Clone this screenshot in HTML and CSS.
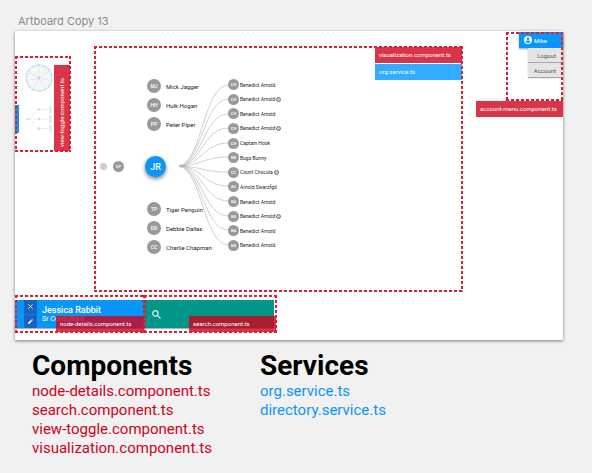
FILE: index.html
```html
<!DOCTYPE html>
<html lang="en">
<head>
<meta charset="utf-8">
<title>Artboard Copy 13</title>
<link rel="stylesheet" href="styles.css">
</head>
<body>
<h1 class="board-name">Artboard Copy 13</h1>
<main class="artboard">
  <div class="workspace">
    <section class="toggle outlined">
      <div class="toggle-options">
        <button class="view" aria-label="Radial view">
          <svg width="28" height="28" viewBox="0 0 28 28" fill="none"><circle cx="14" cy="14" r="11.500" fill="#f6f7f8" stroke="#e3e6e8" stroke-width=".6"/><circle cx="14" cy="14" r="13" stroke="#b5dcf8" stroke-width="1.300" stroke-dasharray="5 .8"/><path d="M14 14 5 8M14 14 14 4M14 14 23 8M14 14 24 16M14 14 19 23M14 14 9 23M14 14 4 16" stroke="#dcdfe2" stroke-width=".7"/><circle cx="14" cy="14" r="6" stroke="#cfe4f3" stroke-width=".8" stroke-dasharray="1 3"/><circle cx="14" cy="14" r="1.500" fill="#b5dcf8"/></svg>
        </button>
        <button class="view current" aria-label="Tree view">
          <svg width="28" height="28" viewBox="0 0 28 28" fill="none"><path d="M3 14H24M3 14C9 14 8 4.500 14 4.500H24M3 14C9 14 8 23.500 14 23.500H24" stroke="#e4e6e8" stroke-width=".7"/><g fill="#b5dcf8"><circle cx="2.500" cy="14" r="1"/><circle cx="14" cy="4.500" r="1.200"/><circle cx="14" cy="14" r="1.200"/><circle cx="14" cy="23.500" r="1.200"/></g><path d="M25.500 1v7M25.500 10.500v7M25.500 20v7" stroke="#d0e8f9" stroke-width="2"/></svg>
        </button>
      </div>
      <span class="tag tag-side">view-toggle.component.ts</span>
    </section>

    <section class="chart outlined">
      <svg class="links" width="50" height="172" viewBox="0 0 50 172" fill="none" stroke="#d0d0d0" stroke-width="1"><path d="M0 87C24 82 24 6 50 6M0 87C24 83 24 20 50 20M0 87C24 84 24 35 50 35M0 87C24 84 24 49 50 49M0 87C24 85 24 64 50 64M0 87C24 86 24 78 50 78M0 87C24 88 24 93 50 93M0 87C24 88 24 107 50 107M0 87C24 89 24 122 50 122M0 87C24 90 24 137 50 137M0 87C24 91 24 151 50 151M0 87C24 92 24 166 50 166"/><path d="M0 87h7" stroke="#999"/></svg>
      <div class="ancestors"><span class="dot"></span><span class="avatar">SP</span></div>
      <div class="peers">
        <ul class="people">
          <li><span class="avatar">MJ</span>Mick Jagger</li>
          <li><span class="avatar">HH</span>Hulk Hogan</li>
          <li><span class="avatar">PP</span>Peter Piper</li>
        </ul>
        <span class="avatar selected">JR</span>
        <ul class="people">
          <li><span class="avatar">TP</span>Tiger Penguin</li>
          <li><span class="avatar">DD</span>Debbie Dallas</li>
          <li><span class="avatar">CC</span>Charlie Chapman</li>
        </ul>
      </div>
      <ul class="reports">
        <li><span class="avatar">CH</span>Benedict Arnold</li>
        <li><span class="avatar">CH</span>Benedict Arnold<i class="more"></i></li>
        <li><span class="avatar">CH</span>Benedict Arnold</li>
        <li><span class="avatar">CH</span>Benedict Arnold<i class="more"></i></li>
        <li><span class="avatar">CH</span>Captain Hook</li>
        <li><span class="avatar">BB</span>Bugs Bunny</li>
        <li><span class="avatar">CC</span>Count Chocula<i class="more"></i></li>
        <li><span class="avatar">AS</span>Arnold Swarzfgd</li>
        <li><span class="avatar">BA</span>Benedict Arnold</li>
        <li><span class="avatar">BA</span>Benedict Arnold<i class="more"></i></li>
        <li><span class="avatar">BA</span>Benedict Arnold</li>
        <li><span class="avatar">BA</span>Benedict Arnold</li>
      </ul>
      <div class="chart-tags">
        <span class="tag">visualization.component.ts</span>
        <span class="tag tag-service">org.service.ts</span>
      </div>
    </section>

    <section class="account">
      <div class="account-area outlined">
        <button class="user"><svg width="8" height="8" viewBox="0 0 24 24" fill="#fff"><path d="M12 0a12 12 0 1 0 0 24 12 12 0 0 0 0-24zm0 4a4 4 0 1 1 0 8 4 4 0 0 1 0-8zm0 17a9 9 0 0 1-7-3.600c0-2.400 4.700-3.600 7-3.600s7 1.200 7 3.600A9 9 0 0 1 12 21z"/></svg>Mike</button>
        <button class="item">Logout</button>
        <button class="item">Account</button>
      </div>
      <span class="tag">account-menu.component.ts</span>
    </section>
  </div>

  <div class="bottom">
    <section class="details outlined">
      <div class="panel">
        <div class="actions">
          <button aria-label="Close"><svg width="5" height="5" viewBox="0 0 6 6" stroke="#fff" stroke-width="1"><path d="M.5.5l5 5M5.500.5l-5 5"/></svg></button>
          <button aria-label="Edit"><svg width="5" height="5" viewBox="0 0 6 6" fill="#fff"><path d="M0 6V4.600L3.500 1.100 4.900 2.500 1.400 6zM4 .7l.7-.7L6 1.300l-.7.7z"/></svg></button>
        </div>
        <div class="person"><h2>Jessica Rabbit</h2><p>Sr Consultant</p></div>
      </div>
      <span class="tag">node-details.component.ts</span>
    </section>
    <section class="search outlined">
      <label class="panel">
        <svg width="9" height="9" viewBox="0 0 9 9" fill="none" stroke="#d9f0ed" stroke-width="1.200"><circle cx="3.400" cy="3.400" r="2.700"/><path d="M5.400 5.400 8.500 8.500"/></svg>
        <input type="search" aria-label="Search">
      </label>
      <span class="tag">search.component.ts</span>
    </section>
  </div>
</main>

<footer class="legend">
  <section>
    <h2>Components</h2>
    <ul>
      <li>node-details.component.ts</li>
      <li>search.component.ts</li>
      <li>view-toggle.component.ts</li>
      <li>visualization.component.ts</li>
    </ul>
  </section>
  <section class="services">
    <h2>Services</h2>
    <ul>
      <li>org.service.ts</li>
      <li>directory.service.ts</li>
    </ul>
  </section>
</footer>
</body>
</html>
```
FILE: styles.css
```css
* { box-sizing: border-box; }
body {
  margin: 0;
  background: #f1f1f1;
  font-family: Roboto, sans-serif;
  color: #222;
}
h1, h2, p, ul { margin: 0; padding: 0; }
ul { list-style: none; }
button {
  border: 0;
  padding: 0;
  font: inherit;
  color: inherit;
  background: none;
}
svg { display: block; }

.board-name {
  padding: 14px 18px 3px;
  font: 400 11px/14px Inter, sans-serif;
  color: #8c8c8c;
}
.artboard {
  margin: 0 29px 0 15px;
  padding: 1px 0 7px;
  background: #fff;
  box-shadow: 0 1px 3px rgba(0, 0, 0, .5);
}

/* dashed frame round each component */
.outlined { position: relative; }
.outlined::after {
  content: "";
  position: absolute;
  inset: 0;
  pointer-events: none;
  --h: repeating-linear-gradient(90deg, #d8203a 0 3px, transparent 3px 5px);
  --v: repeating-linear-gradient(#d8203a 0 3px, transparent 3px 5px);
  background:
    var(--h) top / 100% 2px no-repeat,
    var(--h) bottom / 100% 2px no-repeat,
    var(--v) left / 2px 100% no-repeat,
    var(--v) right / 2px 100% no-repeat;
}
.tag {
  display: block;
  padding: 0 4px;
  font-size: 6px;
  line-height: 16px;
  white-space: nowrap;
  color: #fff;
  background: rgba(208, 2, 27, .8);
}
.tag-service { background: rgba(0, 150, 255, .8); }

.workspace { display: flex; align-items: flex-start; }

.toggle {
  display: flex;
  justify-content: space-between;
  width: 56px;
  height: 96px;
  margin: 24px 23px 0 0;
}
.toggle-options {
  display: flex;
  flex-direction: column;
  gap: 13px;
  padding-top: 8px;
}
.view { padding: 0 0 0 10px; }
.current { box-shadow: inset 4px 0 #0a96f8; }
.tag-side {
  margin: 9px 1px 1px 0;
  padding: 4px 0;
  width: 16px;
  writing-mode: vertical-rl;
  transform: rotate(180deg);
}

.chart {
  display: flex;
  flex: 1;
  height: 246px;
  margin-top: 14px;
}
.links {
  position: absolute;
  left: 85px;
  top: 33px;
}
.avatar {
  display: flex;
  align-items: center;
  justify-content: center;
  flex: none;
  border-radius: 50%;
  background: #999;
  color: #fff;
  font-weight: 500;
}
.ancestors {
  display: flex;
  align-items: center;
  gap: 6px;
  width: 53px;
  padding-left: 6px;
  height: 240px;
}
.dot { width: 7px; height: 7px; border-radius: 50%; background: #ccc; }
.ancestors .avatar { width: 11px; height: 11px; font-size: 4px; }
.peers {
  display: flex;
  flex-direction: column;
  justify-content: space-between;
  width: 81px;
  height: 175px;
  margin-top: 33px;
}
.people { display: grid; gap: 5px; }
.people li {
  display: flex;
  align-items: center;
  gap: 5px;
  height: 14px;
  font-size: 6px;
  white-space: nowrap;
}
.people .avatar { width: 14px; height: 14px; font-size: 5px; }
.avatar.selected {
  width: 21px;
  height: 21px;
  margin-left: -2px;
  background: #0a96f8;
  font-size: 9px;
  box-shadow: 0 2px 4px rgba(0, 0, 0, .5);
}
.reports {
  display: flex;
  flex-direction: column;
  justify-content: space-between;
  height: 172px;
  margin-top: 33px;
  position: relative;
}
.reports li {
  display: flex;
  align-items: center;
  gap: 1px;
  height: 11px;
  font-size: 5px;
  white-space: nowrap;
}
.reports .avatar { width: 11px; height: 11px; font-size: 4px; }
.more {
  width: 5px;
  height: 5px;
  border: 1px solid #777;
  border-radius: 50%;
  background: #ccc;
}
.chart-tags {
  display: grid;
  align-content: start;
  gap: 1px;
  width: 87px;
  margin: 1px 1px 0 auto;
}

.account {
  display: flex;
  flex-direction: column;
  align-items: flex-end;
  width: 87px;
  margin-left: 13px;
}
.account-area {
  display: flex;
  flex-direction: column;
  align-items: flex-end;
  width: 57px;
  height: 69px;
  font-size: 6px;
}
.user {
  display: flex;
  align-items: center;
  gap: 2px;
  width: 44px;
  height: 16px;
  padding-left: 5px;
  color: #fff;
  background: #0a96f8;
  box-shadow: 0 1px 2px rgba(0, 0, 0, .4);
}
.item {
  width: 35px;
  height: 14px;
  margin-bottom: 1px;
  padding-right: 7px;
  text-align: right;
  color: #555;
  background: #e4e4e4;
  box-shadow: 0 1px 1px rgba(0, 0, 0, .35);
}
.account .tag { width: 87px; }

.bottom { display: flex; margin-top: 3px; }
.details, .search {
  display: flex;
  height: 38px;
  padding: 5px 0;
}
.details { width: 130px; }
.search { width: 133px; margin-left: -1px; padding-right: 3px; }
.panel {
  display: flex;
  align-items: center;
  flex: 1;
  min-width: 0;
  background: #0a96f8;
  box-shadow: 0 1px 1px rgba(0, 0, 0, .3);
}
.search .panel { gap: 4px; padding-left: 8px; background: #009688; }
.search input {
  flex: 1;
  min-width: 0;
  border: 0;
  outline: 0;
  background: none;
  font-size: 8px;
  color: #fff;
}
.actions { display: grid; align-self: stretch; width: 13px; margin: 0 5px 0 9px; }
.actions button { display: grid; place-items: center; background: #1565c0; }
.actions button + button { border-top: 1px solid #0a78dc; }
.person { color: #fff; }
.person h2 { font-size: 9px; line-height: 10px; font-weight: 500; }
.person p { font-size: 7px; line-height: 8px; }
.bottom .tag {
  position: absolute;
  right: 1px;
  bottom: 1px;
}
.details .tag { width: 88px; }
.search .tag { width: 87px; }

.legend {
  display: grid;
  grid-template-columns: 184px 1fr;
  gap: 44px;
  padding: 10px 32px 0;
}
.legend h2 { font-size: 28px; line-height: 32px; color: #000; }
.legend li { font-size: 15px; line-height: 19px; color: #d0021b; }
.legend .services li { color: #0a96f8; }
```
